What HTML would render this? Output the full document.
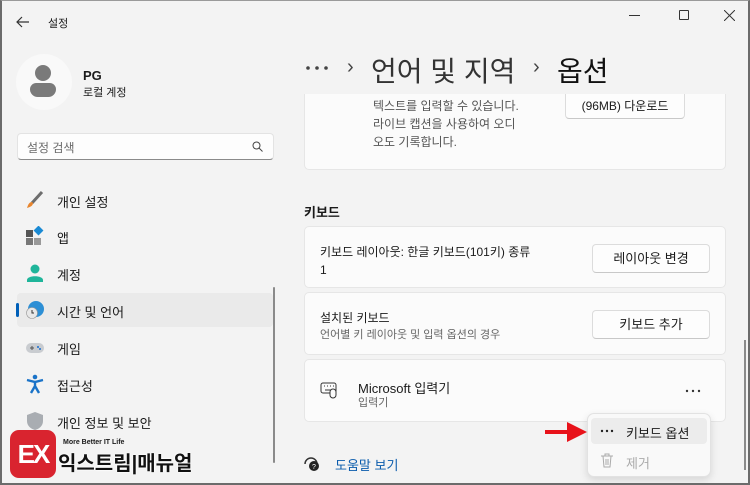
<!DOCTYPE html>
<html><head><meta charset="utf-8"><style>
*{margin:0;padding:0;box-sizing:border-box}
body{width:750px;height:485px;overflow:hidden;background:#f3f3f3;font-family:"Liberation Sans","Noto Sans CJK KR",sans-serif;color:#1a1a1a;position:relative}
.frame{position:absolute;inset:0;border:2px solid #6b6b6b;border-top:1px solid #9a9a9a;pointer-events:none;z-index:50}
.a{position:absolute;white-space:nowrap}
.card{position:absolute;left:304px;width:422px;background:#fbfbfb;border:1px solid #e6e6e6;border-radius:5px}
.btn{position:absolute;background:#fdfdfd;border:1px solid #dcdcdc;border-bottom-color:#c8c8c8;border-radius:4px;font-size:13px;text-align:center}
.nav{position:absolute;left:57px;font-size:13px}
</style></head><body>
<div class="frame"></div>
<svg class="a" style="left:15px;top:15px" width="16" height="14"><path d="M14 7H2M7 2L2 7l5 5" stroke="#333" stroke-width="1.2" fill="none"/></svg>
<div class="a" style="left:48px;top:15px;font-size:11px">설정</div>
<div class="a" style="left:629px;top:15px;width:11px;border-top:1px solid #333"></div>
<div class="a" style="left:679px;top:10px;width:10px;height:10px;border:1px solid #333;border-radius:1px"></div>
<svg class="a" style="left:724px;top:10px" width="11" height="11"><path d="M0 0L11 11M11 0L0 11" stroke="#333" stroke-width="1"/></svg>

<div class="a" style="left:16px;top:54px;width:56px;height:56px;border-radius:50%;background:#f9f9f9"></div>
<div class="a" style="left:35px;top:65px;width:16px;height:16px;border-radius:50%;background:#7a7a7a"></div>
<div class="a" style="left:30px;top:83px;width:26px;height:14px;border-radius:8px 8px 10px 10px;background:#7a7a7a"></div>
<div class="a" style="left:83px;top:68px;font-size:13px;font-weight:bold">PG</div>
<div class="a" style="left:83px;top:84px;font-size:11px">로컬 계정</div>

<div class="a" style="left:17px;top:133px;width:257px;height:27px;background:#fdfdfd;border:1px solid #e3e3e3;border-bottom:1px solid #8a8a8a;border-radius:4px"></div>
<div class="a" style="left:27px;top:139px;font-size:12px;color:#6a6a6a">설정 검색</div>
<svg class="a" style="left:252px;top:141px" width="11" height="11"><circle cx="4.5" cy="4.5" r="3.5" stroke="#444" fill="none"/><path d="M7 7l3.5 3.5" stroke="#444"/></svg>

<svg class="a" style="left:25px;top:190px" width="20" height="20"><path d="M17 2L7 13" stroke="#6d6d6d" stroke-width="3"/><path d="M7 12c-3 0-4 3-5 6 3-1 6-2 6-5z" fill="#e8862f"/></svg>
<div class="nav" style="top:192px">개인 설정</div>
<svg class="a" style="left:25px;top:226px" width="20" height="20"><rect x="1" y="4" width="7" height="7" fill="#555"/><rect x="1" y="12" width="7" height="7" fill="#777"/><rect x="9" y="12" width="7" height="7" fill="#999"/><rect x="10" y="1" width="7" height="7" fill="#1a8ad4" transform="rotate(45 13.5 4.5)"/></svg>
<div class="nav" style="top:228px">앱</div>
<svg class="a" style="left:25px;top:263px" width="20" height="20"><circle cx="10" cy="6" r="4.5" fill="#1fb59a"/><path d="M2 17c0-5 16-5 16 0v2H2z" fill="#1fb59a"/></svg>
<div class="nav" style="top:265px">계정</div>
<div class="a" style="left:17px;top:293px;width:256px;height:34px;background:#eaeaea;border-radius:4px"></div>
<div class="a" style="left:16px;top:303px;width:3px;height:14px;background:#005fb8;border-radius:2px"></div>
<svg class="a" style="left:25px;top:300px" width="20" height="20"><circle cx="11" cy="9" r="8" fill="#2d8fd5"/><circle cx="7" cy="13" r="5.5" fill="#e8e8e8" stroke="#999" stroke-width=".6"/><path d="M7 10v3h2" stroke="#333" fill="none"/></svg>
<div class="nav" style="top:302px">시간 및 언어</div>
<svg class="a" style="left:25px;top:338px" width="20" height="20"><rect x="1" y="5" width="18" height="10" rx="5" fill="#c9ccd0"/><path d="M5 10h4M7 8v4" stroke="#555"/><circle cx="13" cy="9" r="1" fill="#1a6fd0"/><circle cx="15" cy="11" r="1" fill="#1a6fd0"/></svg>
<div class="nav" style="top:339px">게임</div>
<svg class="a" style="left:25px;top:374px" width="20" height="20"><circle cx="10" cy="3" r="2.3" fill="#1a73c8"/><path d="M2 6l8 2 8-2M10 8v4M10 12l-4 7M10 12l4 7" stroke="#1a73c8" stroke-width="2.4" fill="none"/></svg>
<div class="nav" style="top:376px">접근성</div>
<svg class="a" style="left:25px;top:411px" width="20" height="20"><path d="M10 1l8 3v6c0 5-4 8-8 9-4-1-8-4-8-9V4z" fill="#a9adb2"/></svg>
<div class="nav" style="top:413px">개인 정보 및 보안</div>
<div class="a" style="left:273px;top:287px;width:2px;height:176px;background:#8a8a8a;border-radius:1px"></div>

<div class="a" style="left:10px;top:430px;width:46px;height:48px;background:#d9242f;border-radius:9px;color:#fff;font-weight:bold;font-size:26px;line-height:48px;text-align:center;font-family:'Liberation Sans',sans-serif;letter-spacing:-2px">EX</div>
<div class="a" style="left:63px;top:439px;font-size:7px;font-weight:bold">More Better IT Life</div>
<div class="a" style="left:58px;top:447px;font-size:20px;font-weight:bold;color:#111;text-shadow:0 0 2px #fff,0 0 2px #fff">익스트림|매뉴얼</div>

<div class="card" style="top:86px;height:84px;border-top:none;border-radius:0 0 5px 5px"></div>
<div class="a" style="left:373px;top:97px;font-size:12px;color:#555;line-height:18px;white-space:normal;width:190px">텍스트를 입력할 수 있습니다.<br>라이브 캡션을 사용하여 오디<br>오도 기록합니다.</div>
<div class="btn" style="left:565px;top:88px;width:120px;height:31px;padding-top:8px;font-size:12px">(96MB) 다운로드</div>
<div class="a" style="left:290px;top:40px;width:454px;height:54px;background:#f3f3f3"></div>

<svg class="a" style="left:305px;top:64px" width="26" height="8"><circle cx="3" cy="4" r="1.8" fill="#444"/><circle cx="12" cy="4" r="1.8" fill="#444"/><circle cx="21" cy="4" r="1.8" fill="#444"/></svg>
<div class="a" style="left:347px;top:56px;font-size:20px;color:#444">›</div>
<div class="a" style="left:371px;top:50px;font-size:28px;color:#333">언어 및 지역</div>
<div class="a" style="left:533px;top:56px;font-size:20px;color:#444">›</div>
<div class="a" style="left:557px;top:50px;font-size:28px;color:#111">옵션</div>

<div class="a" style="left:304px;top:202px;font-size:13px;font-weight:bold">키보드</div>
<div class="card" style="top:226px;height:62px"></div>
<div class="a" style="left:320px;top:243px;font-size:12px;line-height:18px">키보드 레이아웃: 한글 키보드(101키) 종류<br>1</div>
<div class="btn" style="left:592px;top:244px;width:118px;height:29px;line-height:27px">레이아웃 변경</div>
<div class="card" style="top:292px;height:63px"></div>
<div class="a" style="left:320px;top:309px;font-size:12px">설치된 키보드</div>
<div class="a" style="left:320px;top:326px;font-size:11px;color:#666">언어별 키 레이아웃 및 입력 옵션의 경우</div>
<div class="btn" style="left:592px;top:310px;width:118px;height:29px;line-height:27px">키보드 추가</div>
<div class="card" style="top:359px;height:63px"></div>
<svg class="a" style="left:320px;top:381px" width="20" height="18"><rect x="1" y="2" width="15" height="10" rx="2" stroke="#333" fill="none"/><path d="M4 5h1M7 5h1M10 5h1M13 5h1M5 9h6" stroke="#333"/><rect x="10" y="8" width="6" height="9" rx="3" stroke="#333" fill="#fbfbfb"/></svg>
<div class="a" style="left:358px;top:378px;font-size:13px">Microsoft 입력기</div>
<div class="a" style="left:358px;top:394px;font-size:11px;color:#666">입력기</div>
<svg class="a" style="left:685px;top:389px" width="16" height="4"><circle cx="2" cy="2" r="1.2" fill="#333"/><circle cx="8" cy="2" r="1.2" fill="#333"/><circle cx="14" cy="2" r="1.2" fill="#333"/></svg>

<svg class="a" style="left:303px;top:455px" width="18" height="17"><path d="M2 9a6 6 0 0 1 12 0" stroke="#333" fill="none" stroke-width="1.5"/><circle cx="11" cy="11" r="5" fill="#222"/><text x="9" y="14" font-size="7" fill="#fff" font-family="Liberation Sans">?</text></svg>
<div class="a" style="left:335px;top:455px;font-size:13px;color:#0b5cad">도움말 보기</div>

<div class="a" style="left:587px;top:413px;width:124px;height:64px;background:#f9f9f9;border:1px solid #e2e2e2;border-radius:7px;box-shadow:0 3px 8px rgba(0,0,0,.12)"></div>
<div class="a" style="left:591px;top:418px;width:116px;height:26px;background:#ececec;border-radius:4px"></div>
<svg class="a" style="left:600px;top:429px" width="14" height="4"><circle cx="2" cy="2" r="1.2" fill="#222"/><circle cx="7" cy="2" r="1.2" fill="#222"/><circle cx="12" cy="2" r="1.2" fill="#222"/></svg>
<div class="a" style="left:626px;top:423px;font-size:13px">키보드 옵션</div>
<svg class="a" style="left:600px;top:453px" width="14" height="15"><path d="M1 3h12M5 3V1h4v2M3 3l1 11h6l1-11M6 6v6M8 6v6" stroke="#aaa" fill="none"/></svg>
<div class="a" style="left:626px;top:453px;font-size:13px;color:#aaa">제거</div>

<svg class="a" style="left:545px;top:421px" width="44" height="22"><path d="M0 9h22V1l20 10-20 10v-8H0z" fill="#e8121a"/></svg>
<div class="a" style="left:744px;top:340px;width:2px;height:130px;background:#8a8a8a"></div>
</body></html>
